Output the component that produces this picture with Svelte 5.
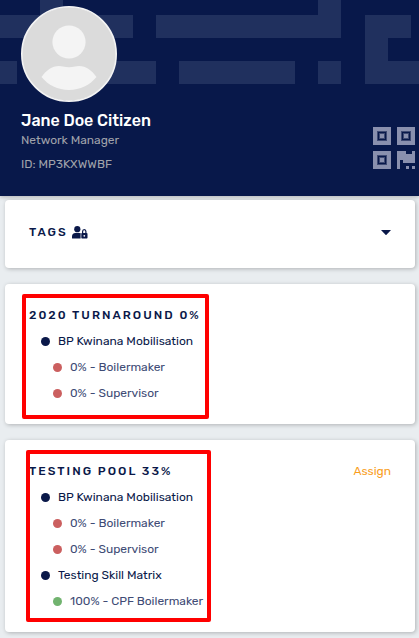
<script>
  let tagsOpen = false;

  const person = {
    name: "Jane Doe Citizen",
    role: "Network Manager",
    id: "MP3KXWWBF",
  };

  const pools = [
    {
      title: "2020 Turnaround 0%",
      assign: false,
      mark: "first",
      groups: [
        {
          name: "BP Kwinana Mobilisation",
          roles: [
            { name: "Boilermaker", percent: 0 },
            { name: "Supervisor", percent: 0 },
          ],
        },
      ],
    },
    {
      title: "Testing Pool 33%",
      assign: true,
      mark: "second",
      groups: [
        {
          name: "BP Kwinana Mobilisation",
          roles: [
            { name: "Boilermaker", percent: 0 },
            { name: "Supervisor", percent: 0 },
          ],
        },
        {
          name: "Testing Skill Matrix",
          roles: [{ name: "CPF Boilermaker", percent: 100 }],
        },
      ],
    },
  ];
</script>

<header>
  <svg class="pattern" width="419" height="84" viewBox="0 0 419 84" aria-hidden="true">
    <path
      d="M0 15H40V0H63V15H133V38H0zM156 15H318V0H341V38H156zM0 61H17V84H0zM60 61H156V84H60zM179 61H295V84H179zM318 61H341V84H318zM365 15H411V38H388V61H419V84H365z"
    />
  </svg>

  <div class="profile">
    <svg class="avatar" width="96" height="96" viewBox="0 0 96 96" aria-hidden="true">
      <circle cx="48" cy="48" r="47.2" fill="#dbdbdb" stroke="#f4f4f4" stroke-width="1.6" />
      <circle cx="48" cy="36" r="16.6" fill="#f4f4f4" />
      <path
        d="M20.5 71C25 64.500 31 60 38 60Q40 60 42 60.600Q48 61.800 54 60.600Q56 60 58 60C65 60 71 64.500 75.500 71C69 79 59 84 48 84S27 79 20.500 71z"
        fill="#f4f4f4"
      />
    </svg>
    <h1>{person.name}</h1>
    <p>{person.role}</p>
    <p class="ident">ID: {person.id}</p>
  </div>

  <button class="qr" aria-label="Show QR code">
    <svg width="42" height="42" viewBox="0 0 42 42" shape-rendering="crispEdges">
      <g fill="#8a90ae">
        <path
          fill-rule="evenodd"
          d="M0 0H18V18H0zM4 4V14H14V4zM24 0H42V18H24zM28 4V14H38V4zM0 24H18V42H0zM4 28V38H14V28z"
        />
        <path d="M7 7h4v4h-4zM31 7h4v4h-4zM7 31h4v4h-4z" />
        <path d="M24 24H33V27H39V24H42V36H30V33H27V42H24zM33 39h3v3h-3zM39 39h3v3h-3z" />
      </g>
      <path
        fill="none"
        stroke="#3f4a73"
        d="M4.500 4.500h9v9h-9zM28.500 4.500h9v9h-9zM4.500 28.500h9v9h-9zM6.500 6.500h5v5h-5zM30.500 6.500h5v5h-5zM6.500 30.500h5v5h-5z"
      />
    </svg>
  </button>
</header>

<main>
  <section class="card tags">
    <button
      class="row toggle"
      aria-expanded={tagsOpen}
      on:click={() => (tagsOpen = !tagsOpen)}
    >
      <span class="title">Tags</span>
      <svg class="lock" width="16" height="13" viewBox="0 0 16 13" aria-hidden="true">
        <circle cx="5.300" cy="3.200" r="3.100" />
        <path d="M0 12V10.500Q0 7 3.500 7H7.500Q8.300 7 9 7.400Q8.600 8 8.600 9V12.500H.6Q0 12.500 0 12z" />
        <path
          fill-rule="evenodd"
          d="M9.300 7.600Q9.300 7 10 7V5.500A2.250 2.500 0 0 1 14.500 5.500V7Q15.500 7 15.500 7.700V11.800Q15.500 12.500 14.800 12.500H10Q9.300 12.500 9.300 11.800zM11.200 7H13.300V5.500A1.050 1.200 0 0 0 11.200 5.500zM12.300 8.900A.9.9 0 1 0 12.300 10.700.9.9 0 0 0 12.300 8.900z"
        />
      </svg>
      <svg class="caret" class:tagsOpen width="10" height="5" viewBox="0 0 10 5" aria-hidden="true">
        <path d="M0 0H10L5.500 4.700Q5 5.200 4.500 4.700z" />
      </svg>
    </button>
  </section>

  {#each pools as pool}
    <section class="card">
      <div class="row">
        <h2 class="title">{pool.title}</h2>
        {#if pool.assign}
          <button class="assign">Assign</button>
        {/if}
      </div>
      <ul>
        {#each pool.groups as group}
          <li>
            <div class="row item"><span class="dot"></span>{group.name}</div>
            <ul>
              {#each group.roles as role}
                <li class="row item role">
                  <span class="dot" class:done={role.percent === 100}></span>
                  {role.percent}% - {role.name}
                </li>
              {/each}
            </ul>
          </li>
        {/each}
      </ul>
      <div class="mark {pool.mark}"></div>
    </section>
  {/each}
</main>

<style>
  :global(body) {
    background: #e9edf0;
    color: #0a1849;
    font-family: Rubik, Roboto, "Liberation Sans", sans-serif;
    font-size: 12px;
  }

  header {
    position: relative;
    background: #08184a;
    padding: 6px 4px 22px 21px;
    display: flex;
    justify-content: space-between;
    align-items: flex-end;
    box-shadow: 0 1px 4px rgba(0, 0, 0, 0.25);
  }
  .pattern {
    position: absolute;
    left: 0;
    top: 0;
    fill: #20305e;
  }
  .profile {
    position: relative;
  }
  .avatar {
    display: block;
  }

  h1 {
    margin: 10px 0 0;
    color: white;
    font-size: 16px;
    font-weight: 500;
    line-height: 18px;
  }
  p {
    margin: 0;
    color: #a0a3ab;
    line-height: 20px;
  }
  .ident {
    margin-top: 4px;
  }

  button {
    background: none;
    border: none;
    color: inherit;
    cursor: pointer;
    font: inherit;
    padding: 0;
  }
  .qr {
    position: relative;
    margin-bottom: 5px;
  }
  .qr svg {
    display: block;
  }

  main {
    display: flex;
    flex-direction: column;
    gap: 16px;
    padding: 4px 4px 6px 5px;
  }
  .card {
    position: relative;
    background: white;
    border-radius: 4px;
    box-shadow: 1px 1px 4px rgba(0, 0, 0, 0.25);
    padding: 18px 24px;
  }
  .tags {
    padding: 19px 24px 23px;
  }

  .row {
    display: flex;
    align-items: center;
    height: 26px;
  }
  .toggle {
    width: 100%;
  }
  .title {
    margin: 0;
    font-size: 12px;
    font-weight: 500;
    letter-spacing: 2px;
    text-transform: uppercase;
  }
  .lock {
    margin-left: 4px;
    fill: #0a1849;
  }
  .caret {
    margin-left: auto;
    fill: #0a1849;
  }
  .caret.tagsOpen {
    transform: rotate(180deg);
  }
  .assign {
    margin-left: auto;
    color: #f99d1c;
  }

  ul {
    list-style: none;
    margin: 0;
    padding: 0;
  }
  .item {
    gap: 8px;
    padding-left: 12px;
  }
  .role {
    padding-left: 24px;
    color: #404b75;
  }
  .dot {
    width: 9px;
    height: 9px;
    border-radius: 50%;
    background: #0a1849;
  }
  .role .dot {
    background: #cb5f5f;
  }
  .role .dot.done {
    background: #71b36f;
  }

  .mark {
    position: absolute;
    top: 10px;
    box-sizing: border-box;
    border: 4px solid #ff0000;
    border-radius: 2px;
    pointer-events: none;
  }
  .first {
    left: 17px;
    width: 187px;
    bottom: 5px;
  }
  .second {
    left: 21px;
    width: 185px;
    bottom: 10px;
  }
</style>
